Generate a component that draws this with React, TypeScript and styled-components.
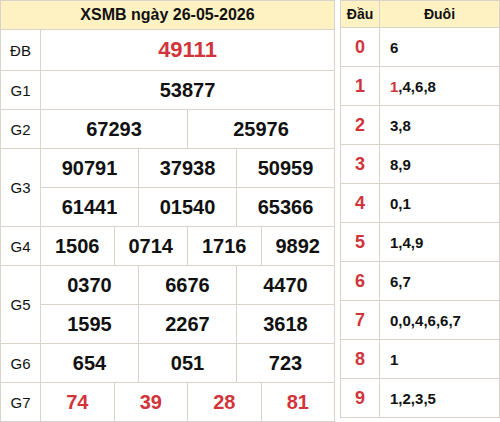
import styled, { createGlobalStyle } from "styled-components";

const BORDER = "#d9d3cb";
const HEAD_BG = "#fff2c2";
const RED = "#d1343a";

const GlobalStyle = createGlobalStyle`
  html, body {
    margin: 0;
    padding: 0;
    background: #ffffff;
  }
  body {
    font-family: "Liberation Sans", Arial, sans-serif;
    color: #111111;
  }
`;

type Prize = {
  label: string;
  rows: string[][];
  red?: boolean;
  big?: boolean;
};

const prizes: Prize[] = [
  { label: "ĐB", rows: [["49111"]], red: true, big: true },
  { label: "G1", rows: [["53877"]] },
  { label: "G2", rows: [["67293", "25976"]] },
  {
    label: "G3",
    rows: [
      ["90791", "37938", "50959"],
      ["61441", "01540", "65366"],
    ],
  },
  { label: "G4", rows: [["1506", "0714", "1716", "9892"]] },
  {
    label: "G5",
    rows: [
      ["0370", "6676", "4470"],
      ["1595", "2267", "3618"],
    ],
  },
  { label: "G6", rows: [["654", "051", "723"]] },
  { label: "G7", rows: [["74", "39", "28", "81"]], red: true },
];

// đầu -> đuôi
const loto: { head: string; tails: { v: string; red?: boolean }[] }[] = [
  { head: "0", tails: [{ v: "6" }] },
  { head: "1", tails: [{ v: "1", red: true }, { v: "4" }, { v: "6" }, { v: "8" }] },
  { head: "2", tails: [{ v: "3" }, { v: "8" }] },
  { head: "3", tails: [{ v: "8" }, { v: "9" }] },
  { head: "4", tails: [{ v: "0" }, { v: "1" }] },
  { head: "5", tails: [{ v: "1" }, { v: "4" }, { v: "9" }] },
  { head: "6", tails: [{ v: "6" }, { v: "7" }] },
  { head: "7", tails: [{ v: "0" }, { v: "0" }, { v: "4" }, { v: "6" }, { v: "6" }, { v: "7" }] },
  { head: "8", tails: [{ v: "1" }] },
  { head: "9", tails: [{ v: "1" }, { v: "2" }, { v: "3" }, { v: "5" }] },
];

const App: React.FC = () => {
  return (
    <>
      <GlobalStyle />
      <Page>
        <ResultPanel>
          <Title>XSMB ngày 26-05-2026</Title>
          {prizes.map(p => (
            <PrizeRow key={p.label}>
              <Label>{p.label}</Label>
              <Values>
                {p.rows.map((row, i) => (
                  <ValueLine key={i} $cols={row.length} $tall={p.big}>
                    {row.map((n, j) => (
                      <Num key={j} $red={p.red} $big={p.big}>
                        {n}
                      </Num>
                    ))}
                  </ValueLine>
                ))}
              </Values>
            </PrizeRow>
          ))}
        </ResultPanel>

        <LotoPanel>
          <LotoRow $head>
            <HeadCell $title>Đầu</HeadCell>
            <TailCell $title>Đuôi</TailCell>
          </LotoRow>
          {loto.map(l => (
            <LotoRow key={l.head}>
              <HeadCell>{l.head}</HeadCell>
              <TailCell>
                {l.tails.map((t, i) => (
                  <span key={i}>
                    {i > 0 && ","}
                    <TailNum $red={t.red}>{t.v}</TailNum>
                  </span>
                ))}
              </TailCell>
            </LotoRow>
          ))}
        </LotoPanel>
      </Page>
    </>
  );
};

export default App;

const Page = styled.div`
  display: flex;
  align-items: flex-start;
  gap: 5px;
  width: 500px;
  height: 422px;
`;

const ResultPanel = styled.div`
  width: 335px;
  box-sizing: border-box;
  border-top: 1px solid ${BORDER};
  border-left: 1px solid ${BORDER};
  display: flex;
  flex-direction: column;
`;

const Title = styled.div`
  height: 29px;
  box-sizing: border-box;
  background: ${HEAD_BG};
  border-right: 1px solid ${BORDER};
  border-bottom: 1px solid ${BORDER};
  display: flex;
  align-items: center;
  justify-content: center;
  font-size: 16px;
  font-weight: 700;
  color: #111;
`;

const PrizeRow = styled.div`
  display: flex;
`;

const Label = styled.div`
  width: 40px;
  flex: 0 0 40px;
  box-sizing: border-box;
  border-right: 1px solid ${BORDER};
  border-bottom: 1px solid ${BORDER};
  display: flex;
  align-items: center;
  justify-content: center;
  font-size: 15px;
  color: #111;
`;

const Values = styled.div`
  flex: 1;
  display: flex;
  flex-direction: column;
`;

const ValueLine = styled.div<{ $cols: number; $tall?: boolean }>`
  display: grid;
  grid-template-columns: repeat(${p => p.$cols}, 1fr);
  height: ${p => (p.$tall ? 41 : 39)}px;
`;

const Num = styled.div<{ $red?: boolean; $big?: boolean }>`
  box-sizing: border-box;
  border-right: 1px solid ${BORDER};
  border-bottom: 1px solid ${BORDER};
  display: flex;
  align-items: center;
  justify-content: center;
  font-size: ${p => (p.$big ? 22 : 20)}px;
  font-weight: 700;
  color: ${p => (p.$red ? RED : "#111")};
`;

const LotoPanel = styled.div`
  width: 160px;
  box-sizing: border-box;
  border-top: 1px solid ${BORDER};
  border-left: 1px solid ${BORDER};
  display: flex;
  flex-direction: column;
`;

const LotoRow = styled.div<{ $head?: boolean }>`
  display: flex;
  height: ${p => (p.$head ? 27 : 39)}px;
  background: ${p => (p.$head ? HEAD_BG : "#fff")};
`;

const HeadCell = styled.div<{ $title?: boolean }>`
  width: 39px;
  flex: 0 0 39px;
  box-sizing: border-box;
  border-right: 1px solid ${BORDER};
  border-bottom: 1px solid ${BORDER};
  display: flex;
  align-items: center;
  justify-content: center;
  font-weight: 700;
  font-size: ${p => (p.$title ? 14 : 18)}px;
  color: ${p => (p.$title ? "#111" : RED)};
`;

const TailCell = styled.div<{ $title?: boolean }>`
  flex: 1;
  box-sizing: border-box;
  border-right: 1px solid ${BORDER};
  border-bottom: 1px solid ${BORDER};
  display: flex;
  align-items: center;
  justify-content: ${p => (p.$title ? "center" : "flex-start")};
  padding-left: ${p => (p.$title ? 0 : 10)}px;
  font-weight: 700;
  font-size: ${p => (p.$title ? 14 : 15)}px;
  color: #111;
`;

const TailNum = styled.span<{ $red?: boolean }>`
  color: ${p => (p.$red ? RED : "inherit")};
`;
